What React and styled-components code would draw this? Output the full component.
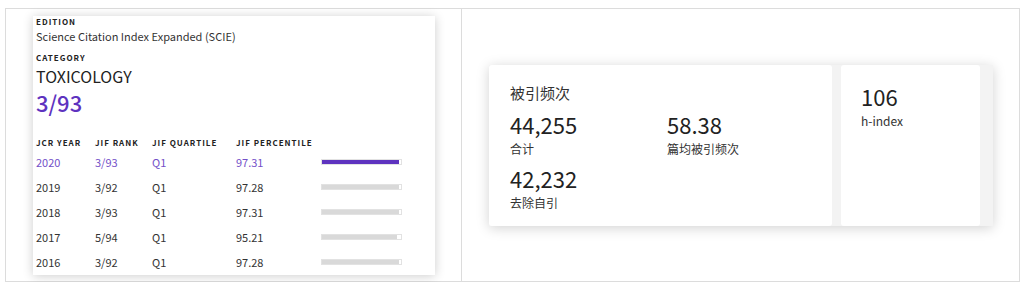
import React from "react";
import styled, { createGlobalStyle } from "styled-components";

const GlobalStyle = createGlobalStyle`
  body {
    margin: 0;
    background: #fff;
    font-family: "Noto Sans CJK SC", "Noto Sans", sans-serif;
    color: #333;
  }
`;

const Frame = styled.div`
  margin: 8px 0 0 5px;
  width: 1013px;
  height: 272px;
  border: 1px solid #dcdcdc;
  display: grid;
  grid-template-columns: 456px 1fr;
`;

const LeftCell = styled.div`
  border-right: 1px solid #dcdcdc;
  padding: 7px 0 0 27px;
`;

const RightCell = styled.div`
  display: flex;
  align-items: center;
  padding-left: 27px;
`;

const RankCard = styled.div`
  width: 399px;
  height: 259px;
  padding-left: 3px;
  background: #fff;
  box-shadow: 0 1px 10px rgba(0, 0, 0, 0.2);
`;

const Label = styled.div`
  font-size: 8px;
  line-height: 12px;
  font-weight: 700;
  letter-spacing: 1px;
  color: #222;
  margin-top: ${(p) => p.$gap || 0}px;
  white-space: nowrap;
`;

const Edition = styled.div`
  font-size: 11px;
  line-height: 16px;
  color: #333;
`;

const Category = styled.div`
  font-size: 16px;
  line-height: 20px;
  margin-top: 2px;
  color: #222;
`;

const Rank = styled.div`
  font-size: 22px;
  line-height: 26px;
  margin-top: 3px;
  font-weight: 500;
  color: #5e33bf;
`;

const Table = styled.div`
  margin-top: 22px;
`;

const Row = styled.div`
  display: grid;
  grid-template-columns: 59px 57px 84px 85px 81px;
  align-items: center;
  height: ${(p) => (p.$head ? 12 : 25)}px;
  font-size: 11px;
  color: ${(p) => (p.$active ? "#7350c8" : "#333")};
`;

const Track = styled.div`
  height: 6px;
  border: 1px solid #e2e2e2;
  background: #fff;
  box-sizing: border-box;
  margin-top: 1px;
`;

const Fill = styled.div`
  height: 100%;
  background: ${(p) => (p.$active ? "#5e33bf" : "#d9d9d9")};
`;

const Panel = styled.div`
  display: flex;
  gap: 9px;
  width: 504px;
  height: 161px;
  background: #f3f3f3;
  box-shadow: 0 2px 12px rgba(0, 0, 0, 0.18);
`;

const Card = styled.div`
  width: ${(p) => p.$w}px;
  background: #fff;
  border-radius: 3px;
  box-sizing: border-box;
  padding: ${(p) => p.$pt}px 0 0 ${(p) => p.$pl}px;
`;

const CardTitle = styled.div`
  font-size: 15px;
  line-height: 20px;
  color: #333;
`;

const StatGrid = styled.div`
  display: grid;
  grid-template-columns: 157px 1fr;
  row-gap: 7px;
  margin-top: 7px;
`;

const Number = styled.div`
  font-size: 22px;
  line-height: 28px;
  color: #222;
`;

const StatLabel = styled.div`
  font-size: 12px;
  line-height: 16px;
  color: #333;
  margin-top: ${(p) => p.$gap || 3}px;
`;

const rows = [
  { year: "2020", rank: "3/93", q: "Q1", pct: "97.31" },
  { year: "2019", rank: "3/92", q: "Q1", pct: "97.28" },
  { year: "2018", rank: "3/93", q: "Q1", pct: "97.31" },
  { year: "2017", rank: "5/94", q: "Q1", pct: "95.21" },
  { year: "2016", rank: "3/92", q: "Q1", pct: "97.28" },
];

export default function App() {
  return (
    <>
      <GlobalStyle />
      <Frame>
        <LeftCell>
          <RankCard>
            <Label>EDITION</Label>
            <Edition>Science Citation Index Expanded (SCIE)</Edition>
            <Label $gap={8}>CATEGORY</Label>
            <Category>TOXICOLOGY</Category>
            <Rank>3/93</Rank>
            <Table>
              <Row $head>
                <Label>JCR YEAR</Label>
                <Label>JIF RANK</Label>
                <Label>JIF QUARTILE</Label>
                <Label>JIF PERCENTILE</Label>
              </Row>
              {rows.map((r, i) => (
                <Row key={r.year} $active={i === 0}>
                  <span>{r.year}</span>
                  <span>{r.rank}</span>
                  <span>{r.q}</span>
                  <span>{r.pct}</span>
                  <Track>
                    <Fill $active={i === 0} style={{ width: `${r.pct}%` }} />
                  </Track>
                </Row>
              ))}
            </Table>
          </RankCard>
        </LeftCell>
        <RightCell>
          <Panel>
            <Card $w={343} $pt={18} $pl={21}>
              <CardTitle>被引频次</CardTitle>
              <StatGrid>
                <div>
                  <Number>44,255</Number>
                  <StatLabel>合计</StatLabel>
                </div>
                <div>
                  <Number>58.38</Number>
                  <StatLabel>篇均被引频次</StatLabel>
                </div>
                <div>
                  <Number>42,232</Number>
                  <StatLabel>去除自引</StatLabel>
                </div>
              </StatGrid>
            </Card>
            <Card $w={139} $pt={17} $pl={20}>
              <Number>106</Number>
              <StatLabel $gap={3}>h-index</StatLabel>
            </Card>
          </Panel>
        </RightCell>
      </Frame>
    </>
  );
}
